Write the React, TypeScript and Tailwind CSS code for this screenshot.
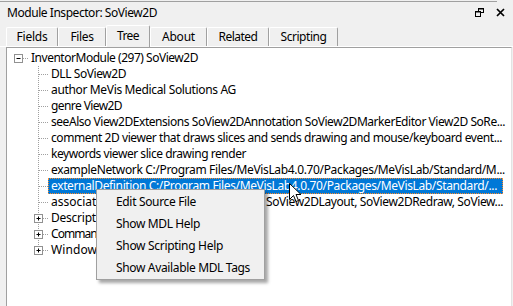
import React, { useLayoutEffect, useRef, useState } from "react";

function Fit({ w, children, className = "" }: { w: number; children: React.ReactNode; className?: string }) {
  const ref = useRef<HTMLSpanElement>(null);
  const [ls, setLs] = useState(0);
  useLayoutEffect(() => {
    const measure = () => {
      const el = ref.current;
      if (!el) return;
      const prev = el.style.letterSpacing;
      el.style.letterSpacing = "0px";
      const nat = el.getBoundingClientRect().width;
      el.style.letterSpacing = prev;
      const n = (el.textContent || "").length || 1;
      setLs((w - nat) / n);
    };
    measure();
    if ((document as any).fonts?.ready) {
      (document as any).fonts.ready.then(measure);
    }
  }, [w]);
  return (
    <span ref={ref} style={{ letterSpacing: `${ls}px` }} className={`inline-block whitespace-nowrap ${className}`}>
      {children}
    </span>
  );
}

type Row = {
  level: 0 | 1;
  box?: "minus" | "plus";
  last?: boolean;
  text: React.ReactNode;
  selected?: boolean;
};

const rows: Row[] = [
  { level: 0, box: "minus", text: <Fit w={167}>InventorModule (297) SoView2D</Fit> },
  { level: 1, text: <Fit w={75}>DLL SoView2D</Fit> },
  { level: 1, text: <Fit w={185}>author MeVis Medical Solutions AG</Fit> },
  { level: 1, text: <Fit w={71}>genre View2D</Fit> },
  {
    level: 1,
    text: <Fit w={454}>seeAlso View2DExtensions SoView2DAnnotation SoView2DMarkerEditor View2D SoRe...</Fit>,
  },
  {
    level: 1,
    text: <Fit w={451}>comment 2D viewer that draws slices and sends drawing and mouse/keyboard event...</Fit>,
  },
  { level: 1, text: <Fit w={195}>keywords viewer slice drawing render</Fit> },
  {
    level: 1,
    text: <Fit w={454}>exampleNetwork C:/Program Files/MeVisLab4.0.70/Packages/MeVisLab/Standard/M...</Fit>,
  },
  {
    level: 1,
    selected: true,
    text: <Fit w={446}>externalDefinition C:/Program Files/MeVisLab4.0.70/Packages/MeVisLab/Standard/...</Fit>,
  },
  {
    level: 1,
    text: (
      <>
        <span className="inline-block w-[215px] overflow-hidden whitespace-nowrap align-top">
          associatedTests SoView2DInteraction,
        </span>
        <Fit w={237}>SoView2DLayout, SoView2DRedraw, SoView...</Fit>
      </>
    ),
  },
  { level: 1, box: "plus", text: <Fit w={62}>Description</Fit> },
  { level: 1, box: "plus", text: <Fit w={57}>Commands</Fit> },
  { level: 1, box: "plus", last: true, text: <Fit w={46}>Window</Fit> },
];

const LINE = "#a0a0a0";

function Guide({ row }: { row: Row }) {
  if (row.level === 0) {
    return (
      <svg width="20" height="16" className="shrink-0 block">
        <rect x="6.5" y="4.5" width="8" height="8" fill="#fff" stroke="#919191" />
        <line x1="8.5" y1="8.5" x2="12.5" y2="8.5" stroke="#000" />
        <line x1="15" y1="8.5" x2="20" y2="8.5" stroke={LINE} strokeDasharray="1 1" />
      </svg>
    );
  }
  return (
    <svg width="40" height="16" className="shrink-0 block">
      <line
        x1="30.5"
        y1="0"
        x2="30.5"
        y2={row.last ? 8.5 : 16}
        stroke={LINE}
        strokeDasharray="1 1"
      />
      {row.box ? (
        <>
          <rect x="26.5" y="4.5" width="8" height="8" fill="#fff" stroke="#919191" />
          <line x1="28.5" y1="8.5" x2="32.5" y2="8.5" stroke="#000" />
          {row.box === "plus" && <line x1="30.5" y1="6.5" x2="30.5" y2="10.5" stroke="#000" />}
          <line x1="35" y1="8.5" x2="40" y2="8.5" stroke={LINE} strokeDasharray="1 1" />
        </>
      ) : (
        <line x1="31" y1="8.5" x2="40" y2="8.5" stroke={LINE} strokeDasharray="1 1" />
      )}
    </svg>
  );
}

const tabs = [
  { label: "Fields", w: "w-[52px]", tw: 31 },
  { label: "Files", w: "w-[48px]", tw: 23 },
  { label: "Tree", w: "w-[44px]", tw: 22, active: true },
  { label: "About", w: "w-[57px]", tw: 33 },
  { label: "Related", w: "w-[62px]", tw: 39 },
  { label: "Scripting", w: "w-[69px]", tw: 46 },
];

const menu: [string, number][] = [
  ["Edit Source File", 80],
  ["Show MDL Help", 84],
  ["Show Scripting Help", 107],
  ["Show Available MDL Tags", 134],
];

export default function App() {
  return (
    <div className="relative w-[513px] h-[306px] overflow-hidden bg-[#f0f0f0] text-[12px] text-black font-['Noto_Sans',sans-serif] leading-none">
      {/* top border */}
      <div className="h-[1px] bg-[#f0f0f0]" />
      <div className="h-[1px] w-[497px] bg-[#a0a0a0]" />
      {/* title bar */}
      <div className="flex h-[22px] items-center pl-[7px] pr-[4px]">
        <span className="flex-1 pb-[1px]">
          <Fit w={150}>Module Inspector: SoView2D</Fit>
        </span>
        <svg width="10" height="9" viewBox="0 0 10 9" className="mr-[11px] mb-[1px]">
          <rect x="3.5" y="0.5" width="5" height="4" fill="none" stroke="#000" />
          <line x1="3" y1="1" x2="9" y2="1" stroke="#000" />
          <rect x="0.5" y="3.5" width="5" height="5" fill="#f0f0f0" stroke="#000" />
          <line x1="0" y1="4" x2="6" y2="4" stroke="#000" />
        </svg>
        <svg width="9" height="9" viewBox="0 0 9 9" className="mr-[4px] mb-[1px]">
          <path d="M1 1 L8 8 M8 1 L1 8" stroke="#000" strokeWidth="1.7" />
        </svg>
      </div>
      {/* tabs */}
      <div className="flex h-[22px] items-end pl-[6px]">
        {tabs.map((t) =>
          t.active ? (
            <div
              key={t.label}
              className={`${t.w} h-[22px] -mb-[1px] relative z-10 flex items-center justify-center bg-[#f0f0f0] border-l border-t border-white border-r border-r-[#a0a0a0] rounded-t-[2px] pb-[2px]`}
            >
              <Fit w={t.tw}>{t.label}</Fit>
            </div>
          ) : (
            <div
              key={t.label}
              className={`${t.w} h-[19px] flex items-center justify-center bg-[#f0f0f0] border-l border-t border-white border-r border-r-[#a0a0a0] rounded-t-[2px]`}
            >
              <Fit w={t.tw}>{t.label}</Fit>
            </div>
          )
        )}
      </div>
      {/* pane */}
      <div className="border-t border-white pl-[6px] pr-[1px] h-[262px]">
        <div className="h-full border-t border-l border-[#a0a0a0] border-r border-r-[#e3e3e3] bg-white pt-[2px] pl-[1px]">
          {rows.map((r, i) => (
            <div key={i} className="flex h-[16px] items-center whitespace-nowrap">
              <Guide row={r} />
              {r.selected ? (
                <span className="h-[16px] w-[455px] flex items-center bg-[#0078d7] text-white pl-[3px] border border-dotted border-[#ff8a28]">
                  <span className="-ml-[1px] flex items-center">{r.text}</span>
                </span>
              ) : (
                <span className="pl-[3px] flex items-center">{r.text}</span>
              )}
            </div>
          ))}
        </div>
      </div>

      {/* context menu */}
      <div className="absolute left-[96px] top-[189px] w-[169px] bg-[#f0f0f0] border border-[#a0a0a0] pt-[1px] shadow-[3px_3px_3px_rgba(0,0,0,0.35)]">
        {menu.map(([m, w]) => (
          <div key={m} className="h-[22px] flex items-center pl-[19px]">
            <Fit w={w}>{m}</Fit>
          </div>
        ))}
      </div>

      {/* mouse cursor */}
      <svg
        width="13"
        height="20"
        viewBox="0 0 13 20"
        className="absolute left-[289px] top-[183px]"
      >
        <path
          d="M0.5 0.5 L0.5 16.5 L4.5 12.5 L7 18.5 L9.5 17.5 L7 11.5 L12 11.5 Z"
          fill="#fff"
          stroke="#000"
          strokeLinejoin="miter"
        />
      </svg>
    </div>
  );
}
